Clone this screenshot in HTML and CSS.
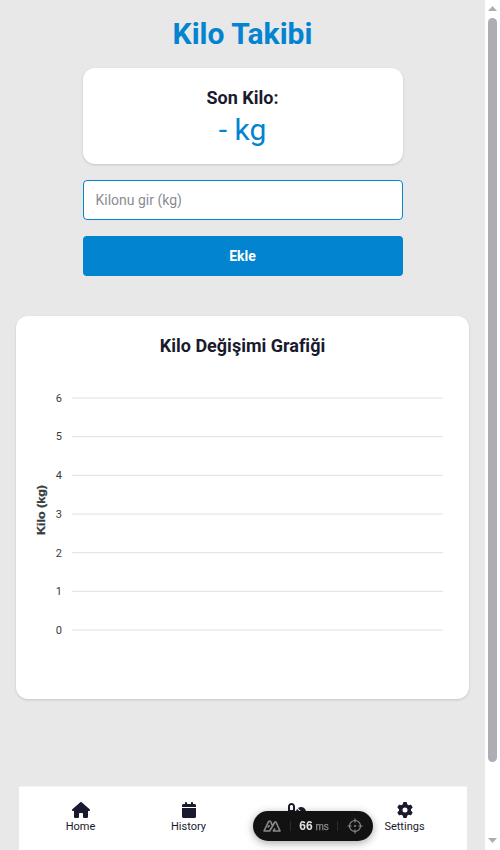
FILE: index.html
```html
<!DOCTYPE html>
<html lang="tr">
<head>
<meta charset="utf-8">
<title>Kilo Takibi</title>
<link rel="stylesheet" href="styles.css">
</head>
<body>
<div class="viewport">
  <main class="page">
    <h1 class="title">Kilo Takibi</h1>
    <section class="card current">
      <h2 class="card-title">Son Kilo:</h2>
      <p class="weight">- kg</p>
    </section>
    <input class="field" type="text" placeholder="Kilonu gir (kg)">
    <button class="button" type="button">Ekle</button>
    <section class="card chart-card">
      <h2 class="card-title">Kilo Değişimi Grafiği</h2>
      <svg class="chart" viewBox="0 0 421 320" width="421" height="320">
        <g class="grid">
          <path d="M40 35h371M40 73.67h371M40 112.33h371M40 151h371M40 189.67h371M40 228.33h371M40 267h371"/>
        </g>
        <g class="ticks">
          <text x="30" y="39">6</text>
          <text x="30" y="77">5</text>
          <text x="30" y="116">4</text>
          <text x="30" y="155">3</text>
          <text x="30" y="194">2</text>
          <text x="30" y="232">1</text>
          <text x="30" y="271">0</text>
        </g>
        <text class="axis" transform="translate(13 172) rotate(-90)" textLength="50" lengthAdjust="spacingAndGlyphs">Kilo (kg)</text>
      </svg>
    </section>
  </main>
  <div class="scrollbar">
    <span class="arrow up"></span>
    <span class="thumb"></span>
    <span class="arrow down"></span>
  </div>
</div>
<nav class="nav">
  <a class="nav-item">
    <svg width="18" height="16" viewBox="0 0 576 512"><path d="M575.8 255.5c0 18-15 32.1-32 32.1h-32l.7 160.2c0 2.7-.2 5.4-.5 8.1V472c0 22.1-17.9 40-40 40H456c-1.1 0-2.2 0-3.3-.1c-1.4 .1-2.8 .1-4.2 .1H416 392c-22.1 0-40-17.9-40-40V448 384c0-17.7-14.3-32-32-32H256c-17.7 0-32 14.3-32 32v64 24c0 22.1-17.9 40-40 40H160 128.1c-1.5 0-3-.1-4.5-.2c-1.2 .1-2.4 .2-3.6 .2H104c-22.1 0-40-17.9-40-40V360c0-.9 0-1.9 .1-2.8V287.6H32c-18 0-32-14-32-32.1c0-9 3-17 10-24L266.4 8c7-7 15-8 22-8s15 2 21 7L564.8 231.5c8 7 12 15 11 24z"/></svg>
    <span>Home</span>
  </a>
  <a class="nav-item">
    <svg width="14" height="16" viewBox="0 0 448 512"><path d="M96 32V64H48C21.5 64 0 85.5 0 112v48H448V112c0-26.5-21.5-48-48-48H352V32c0-17.7-14.3-32-32-32s-32 14.3-32 32V64H160V32c0-17.7-14.3-32-32-32S96 14.3 96 32zM448 192H0V464c0 26.5 21.5 48 48 48H400c26.5 0 48-21.5 48-48V192z"/></svg>
    <span>History</span>
  </a>
  <a class="nav-item">
    <svg width="18" height="16" viewBox="0 0 576 512"><path d="M112 96c-26.5 0-48 21.5-48 48V256h96V144c0-26.5-21.5-48-48-48zM0 144C0 82.1 50.1 32 112 32s112 50.1 112 112V368c0 61.9-50.1 112-112 112S0 429.9 0 368V144zM554.9 399.4c-7.1 12.3-23.7 13.1-33.8 3.1L333.5 214.9c-10-10-9.3-26.7 3.1-33.8C360 167.7 387.1 160 416 160c88.4 0 160 71.6 160 160c0 28.9-7.7 56-21.1 79.4zm-59.5 59.5C472 472.3 444.9 480 416 480c-88.4 0-160-71.6-160-160c0-28.9 7.7-56 21.1-79.4c7.1-12.3 23.7-13.1 33.8-3.1L498.5 425.1c10 10 9.3 26.7-3.1 33.8z"/></svg>
  </a>
  <a class="nav-item">
    <svg width="16" height="16" viewBox="0 0 512 512"><path d="M495.9 166.6c3.2 8.7 .5 18.4-6.4 24.6l-43.3 39.4c1.1 8.3 1.7 16.8 1.7 25.4s-.6 17.1-1.7 25.4l43.3 39.4c6.9 6.2 9.6 15.9 6.4 24.6c-4.4 11.9-9.7 23.3-15.8 34.3l-4.7 8.1c-6.6 11-14 21.4-22.1 31.2c-5.9 7.2-15.7 9.6-24.5 6.8l-55.7-17.7c-13.4 10.3-28.2 18.9-44 25.4l-12.5 57.1c-2 9.1-9 16.3-18.2 17.8c-13.8 2.3-28 3.5-42.5 3.5s-28.7-1.2-42.5-3.5c-9.2-1.5-16.2-8.7-18.2-17.8l-12.5-57.1c-15.8-6.5-30.6-15.1-44-25.4L83.1 425.9c-8.8 2.8-18.6 .3-24.5-6.8c-8.1-9.8-15.5-20.2-22.1-31.2l-4.7-8.1c-6.1-11-11.4-22.4-15.8-34.3c-3.2-8.7-.5-18.4 6.4-24.6l43.3-39.4C64.6 273.1 64 264.6 64 256s.6-17.1 1.7-25.4L22.4 191.2c-6.9-6.2-9.6-15.9-6.4-24.6c4.4-11.9 9.7-23.3 15.8-34.3l4.7-8.1c6.6-11 14-21.4 22.1-31.2c5.9-7.2 15.7-9.6 24.5-6.8l55.7 17.7c13.4-10.3 28.2-18.9 44-25.4l12.5-57.1c2-9.1 9-16.3 18.2-17.8C227.3 1.2 241.5 0 256 0s28.7 1.2 42.5 3.5c9.2 1.5 16.2 8.7 18.2 17.8l12.5 57.1c15.8 6.5 30.6 15.1 44 25.4l55.7-17.7c8.8-2.8 18.6-.3 24.5 6.8c8.1 9.8 15.5 20.2 22.1 31.2l4.7 8.1c6.1 11 11.4 22.4 15.8 34.3zM256 336a80 80 0 1 0 0-160 80 80 0 1 0 0 160z"/></svg>
    <span>Settings</span>
  </a>
</nav>
<div class="meter">
  <svg class="peaks" width="18" height="12" viewBox="0 0 18 12"><path d="M6.6 5.2L4.8 7.6M1 11L5.8 1.2H7.4L9.6 6L6.6 11ZM9.6 6L11.8 2H13L17 11H10.4L12 8.4"/></svg>
  <i class="sep"></i>
  <span class="reading"><b>66</b> ms</span>
  <i class="sep"></i>
  <svg class="target" width="16" height="16" viewBox="0 0 16 16"><circle cx="8" cy="8" r="5.5"/><path d="M8 .5v4M8 11.5v4M.5 8h4M11.5 8h4"/><circle class="dot" cx="8" cy="8" r="1.1"/></svg>
</div>
</body>
</html>
```
FILE: styles.css
```css
* { box-sizing: border-box; }
body {
  margin: 0;
  background: #fff;
  color: #1a1a2e;
  font-family: Roboto, "Liberation Sans", sans-serif;
  overflow: hidden;
}
h1, h2, p { margin: 0; }
.viewport { display: flex; width: 497px; height: 850px; }
.page {
  width: 485px;
  padding: 16px;
  background: #e8e8e8;
  display: flex;
  flex-direction: column;
  align-items: center;
}
.title { font-size: 30px; line-height: 36px; font-weight: 700; color: #0284d1; margin-bottom: 16px; }
.card {
  background: #fff;
  border-radius: 12px;
  box-shadow: 0 1px 3px rgba(0,0,0,.1), 0 1px 2px rgba(0,0,0,.06);
}
.current { width: 320px; height: 96px; padding: 16px; text-align: center; }
.card-title { font-size: 18px; line-height: 28px; font-weight: 700; }
.weight { font-size: 30px; line-height: 36px; color: #0284d1; }
.field {
  width: 320px;
  height: 40px;
  margin: 16px 0;
  padding: 0 12px;
  border: 1px solid #0284d1;
  border-radius: 4px;
  background: #fff;
  font: 14px Roboto, sans-serif;
}
.field::placeholder { color: #8c8c94; }
.button {
  width: 320px;
  height: 40px;
  border: 0;
  border-radius: 4px;
  background: #0284d1;
  color: #fff;
  font: 700 14px Roboto, sans-serif;
}
.chart-card {
  width: 453px;
  height: 383px;
  margin-top: 40px;
  padding: 16px;
  text-align: center;
}
.chart { display: block; margin-top: 3px; }
.grid path { stroke: #e0e0e0; stroke-width: 1; fill: none; }
.ticks { font: 11px Roboto, sans-serif; fill: #373d3f; text-anchor: end; }
.axis { font: 700 11px "Liberation Sans", sans-serif; fill: #373d3f; stroke: #373d3f; stroke-width: .3; }
.scrollbar {
  width: 12px;
  padding: 6px 0 7px 3px;
  display: flex;
  flex-direction: column;
  background: #fff;
}
.arrow { width: 9px; height: 5px; background: #adadb3; }
.up { clip-path: polygon(50% 0, 100% 100%, 0 100%); }
.down { clip-path: polygon(0 0, 100% 0, 50% 100%); margin-top: auto; }
.thumb { width: 9px; height: 744px; margin-top: 7px; border-radius: 5px; background: #adadb3; }
.nav {
  position: fixed;
  left: 19px;
  bottom: 0;
  width: 448px;
  height: 64px;
  padding: 0 8px 0 7.5px;
  display: flex;
  background: #fff;
  border-top: 1px solid #f3f3f3;
}
.nav-item {
  width: 108px;
  padding-top: 15px;
  display: flex;
  flex-direction: column;
  align-items: center;
  font-size: 11px;
  line-height: 18px;
}
.nav-item svg { fill: #1a1a2e; }
.meter {
  position: fixed;
  left: 253px;
  top: 811px;
  width: 120px;
  height: 30px;
  padding: 0 10px;
  display: flex;
  align-items: center;
  justify-content: space-between;
  border-radius: 15px;
  background: #121212;
  box-shadow: 0 2px 8px rgba(0,0,0,.35);
}
.meter svg { fill: none; stroke: #8a8a8a; stroke-width: 1.6; stroke-linejoin: round; }
.meter .target { stroke-width: 1.2; }
.meter .dot { fill: #8a8a8a; stroke: none; }
.sep { width: 1px; height: 10px; background: #2c2c2c; }
.reading { font: 500 10px "Liberation Sans", sans-serif; color: #8a8a8a; -webkit-text-stroke: .25px #8a8a8a; }
.reading b { font-size: 12px; font-weight: 700; color: #e0e0e0; -webkit-text-stroke: 0; }
```
